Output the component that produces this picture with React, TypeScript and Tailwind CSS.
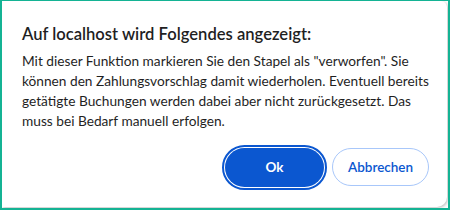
export default function App() {
  return (
    <div className="w-[450px] h-[210px] bg-white border-[2px] border-[#14b394] border-t-[1px] overflow-hidden">
      <div
        className="h-[206px] w-[445px] bg-white rounded-br-[10px] rounded-tr-[6px] shadow-[1px_1px_3px_rgba(0,0,0,0.25)] pl-[20px] pr-[16px] pt-[22px] flex flex-col"
        style={{ fontFamily: 'Lato, "Noto Sans", sans-serif' }}
      >
        <h1 className="text-[16.6px] font-semibold text-[#1f1f1f] leading-[22px]">
          Auf localhost wird Folgendes angezeigt:
        </h1>
        <p className="mt-[6px] text-[13.7px] leading-[20px] text-[#1f1f1f] whitespace-nowrap">
          Mit dieser Funktion markieren Sie den Stapel als "verworfen". Sie
          <br />
          können den Zahlungsvorschlag damit wiederholen. Eventuell bereits
          <br />
          getätigte Buchungen werden dabei aber nicht zurückgesetzt. Das
          <br />
          muss bei Bedarf manuell erfolgen.
        </p>
        <div className="flex justify-end gap-[8px] mt-[17px] pr-[2px]">
          <button className="w-[99px] h-[39px] rounded-full bg-[#0b57d0] text-white text-[13.5px] font-bold ring-1 ring-white outline-2 outline-offset-[1px] outline-[#0b57d0]">
            Ok
          </button>
          <button className="w-[97px] h-[38px] rounded-full border border-[#a8c7fa] text-[#0b57d0] text-[13.5px] font-semibold bg-white">
            Abbrechen
          </button>
        </div>
      </div>
    </div>
  );
}
